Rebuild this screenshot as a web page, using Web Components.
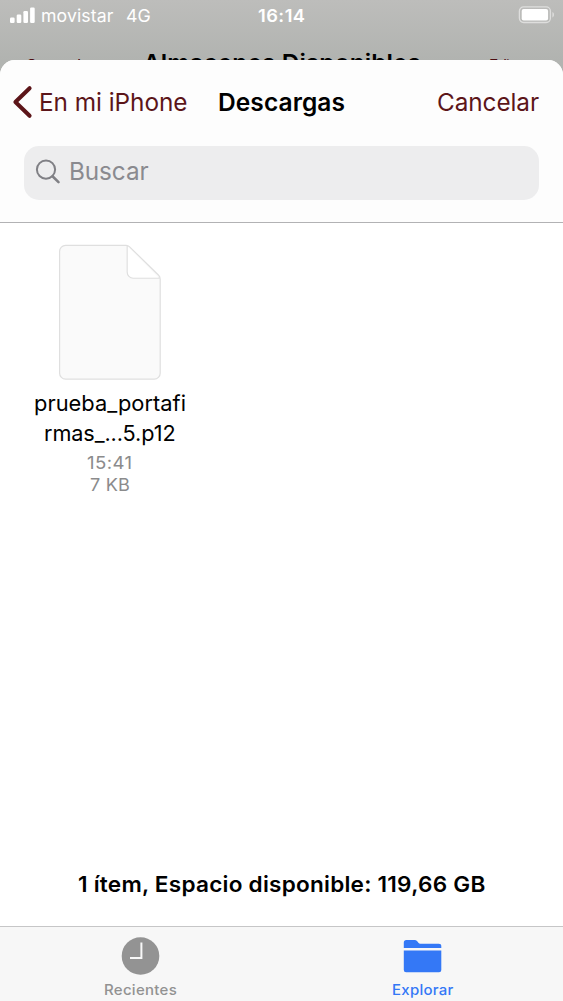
<!DOCTYPE html>
<html lang="es">
<head>
<meta charset="utf-8">
<title>Descargas</title>
<style>
html,body{margin:0;height:100%;overflow:hidden}
body{font-family:Inter,"Liberation Sans",sans-serif;font-optical-sizing:none;background:#fff}
</style>
</head>
<body>
<files-app></files-app>
<script>
const define=(name,html,ready)=>customElements.define(name,class extends HTMLElement{
  constructor(){super();this.attachShadow({mode:'open'}).innerHTML=html;}
  connectedCallback(){if(ready)ready.call(this);}
});

/* A single line of text set to its "width" attribute, half by tracking and half by stretching. */
define('fit-text','<style>:host{display:block;white-space:nowrap;flex:none}span{display:inline-block;transform-origin:0 50%}</style><span><slot></slot></span>',function(){
  const w=parseFloat(this.getAttribute('width'));
  const s=this.shadowRoot.querySelector('span');
  this.style.width=w+'px';
  const natural=s.getBoundingClientRect().width;
  if(!natural)return;
  s.style.letterSpacing=((w-natural)/2/this.textContent.length).toFixed(3)+'px';
  s.style.transform='scaleX('+(w/s.getBoundingClientRect().width).toFixed(4)+')';
});

define('signal-bars',`<style>:host{display:block;width:26px;height:17px}svg{display:block}</style>
<svg width="26" height="17" fill="#fff"><rect x="0" y="10.5" width="4.6" height="5.5" rx="1.2"/><rect x="6.7" y="7.5" width="4.6" height="8.5" rx="1.2"/><rect x="13.4" y="4" width="4.6" height="12" rx="1.2"/><rect x="20.1" y="0.5" width="4.6" height="15.5" rx="1.2"/></svg>`);

define('battery-icon',`<style>:host{display:block}svg{display:block}</style>
<svg width="37" height="18" fill="none"><rect x="1.4" y=".9" width="31" height="15.6" rx="4.2" stroke="#dededd" stroke-width="1.3"/><rect x="3.7" y="2.9" width="26.4" height="11.6" rx="2" fill="#fff"/><path d="M34.4 6v5.4c2.2-.9 2.2-4.5 0-5.4z" fill="#dcdcdb"/></svg>`);

define('status-bar',`<style>
:host{display:grid;grid-template-columns:1fr auto 1fr;height:31px;align-items:center;color:#fff;font-size:17.5px;line-height:31px}
.left{display:flex;align-items:center;padding-left:10px}
.net{margin-left:12.5px}.left .name{margin-left:5px}
.time{font-weight:600}
battery-icon{justify-self:end;margin-right:8px;margin-top:-1px}
</style>
<div class="left"><signal-bars></signal-bars><fit-text class="name" width="72.5">movistar</fit-text><fit-text class="net" width="25">4G</fit-text></div>
<fit-text class="time" width="47.5">16:14</fit-text><battery-icon></battery-icon>`);

define('back-page',`<style>
:host{display:block;height:60px;overflow:hidden;background:linear-gradient(#bdbdbb,#b1b3b0)}
.nav{display:grid;grid-template-columns:1fr auto 1fr;grid-template-rows:64px;align-items:center;padding:0 25px;color:#4b0c10;font-size:18px;line-height:64px}
.title{font-size:24.3px;font-weight:600;color:#000;margin-left:1px}
.side{padding-top:7px}
.end{justify-self:end;margin-right:12px}
</style>
<status-bar></status-bar><div class="nav"><fit-text class="side" width="72">Cancelar</fit-text><fit-text class="title" width="278">Almacenes Disponibles</fit-text><fit-text class="side end" width="37">Editar</fit-text></div>`);

define('sheet-nav',`<style>
:host{display:flex;align-items:center;height:84px;padding:0 24px 0 12px;font-size:24.4px;line-height:83px;color:#5c1519}
svg{display:block;margin-right:5.5px}
.title{font-weight:600;color:#000;margin-left:31px}
.cancel{margin-left:auto}
</style>
<svg width="21" height="34" fill="none" stroke="#5c1519" stroke-width="4" stroke-linecap="round" stroke-linejoin="round"><path d="M17.6 3.2 3.4 17 17.6 30.8"/></svg>
<fit-text width="148.5">En mi iPhone</fit-text><fit-text class="title" width="127">Descargas</fit-text><fit-text class="cancel" width="102">Cancelar</fit-text>`);

define('search-field',`<style>
:host{display:flex;align-items:center;box-sizing:border-box;height:54px;margin:1.5px 24px 0;padding-left:11px;background:#ededee;border-radius:15px;font-size:24.5px;line-height:50px;color:#8a8a8f}
svg{display:block;margin:-1px 8px 0 0}
fit-text{padding-bottom:3px}
</style>
<svg width="26" height="26" fill="none" stroke="#808085" stroke-width="2"><circle cx="11" cy="10.6" r="9.1"/><path d="m17.5 17.3 6 5.8" stroke-width="2.6" stroke-linecap="round"/></svg><fit-text width="79.5">Buscar</fit-text>`);

define('file-item',`<style>
:host{display:flex;flex-direction:column;align-items:center;width:220px;font-size:21.8px;line-height:30px;color:#000}
svg{display:block;margin-bottom:7px}
.meta{font-size:17.8px;line-height:22px;color:#8b8b8c}
.first{margin-top:4px}
</style>
<svg width="104" height="138" fill="#fafafa" stroke="#dfdfdf" stroke-width="1.2" stroke-linejoin="round"><g transform="translate(.6 .7)"><path d="M7 1.6h60.5q2 0 3.5 1.5l29 28.5q1.6 1.6 1.6 4v93.9a6 6 0 0 1-6 6H7a6 6 0 0 1-6-6V7.6a6 6 0 0 1 6-6z"/><path d="M68.6 2v26.4a6 6 0 0 0 6 6h26.6" fill="none"/><path d="M69.3 3v25.4a5.3 5.3 0 0 0 5.3 5.3h25.2z" fill="#fff" stroke="none"/></g></svg>
<fit-text width="152">prueba_portafi</fit-text><fit-text width="131.5">rmas_...5.p12</fit-text><fit-text class="meta first" width="45.5">15:41</fit-text><fit-text class="meta" width="40">7 KB</fit-text>`);

define('clock-icon',`<style>:host,svg{display:block}</style><svg width="39" height="39"><circle cx="19.5" cy="20" r="18.8" fill="#939393"/><path d="M20.4 6.6v15.3H9" fill="none" stroke="#f8f8f8" stroke-width="2"/></svg>`);
define('folder-icon',`<style>:host,svg{display:block}</style><svg width="39" height="39" fill="#3478f6"><g transform="translate(0 .6)"><path d="M.8 11.5V5.8q0-2.5 2.5-2.5h8.4q1.4 0 2.3 1.2l1.6 2q.6.7 1.6.7h18.5q2.6 0 2.6 2.4v1.9z"/><path d="M.8 13.8h37.5v19.6q0 2.3-2.3 2.3H3.1q-2.3 0-2.3-2.3z"/></g></svg>`);

define('tab-item',`<style>:host{display:flex;flex:1;flex-direction:column;align-items:center;padding-top:9px;font-size:14.5px;font-weight:500;line-height:30px;color:#929292}:host([active]){color:#3478f6}</style><slot></slot>`);
define('tab-bar',`<style>:host{display:flex;box-sizing:border-box;height:75px;border-top:1.5px solid #c6c6c7;background:#f7f7f7}</style>
<tab-item><clock-icon></clock-icon><fit-text width="73">Recientes</fit-text></tab-item><tab-item active><folder-icon></folder-icon><fit-text width="61.5">Explorar</fit-text></tab-item>`);

define('files-app',`<style>
:host{display:flex;flex-direction:column;height:1001px;background:#b2b4b1}
.sheet{display:flex;flex-direction:column;flex:1;background:#fff;border-radius:15px 15px 0 0;overflow:hidden}
header{box-sizing:border-box;height:163px;flex:none;border-bottom:1px solid #b2b2b4;background:#fdfdfd}
main{flex:1;padding-top:20px}
.summary{display:flex;justify-content:center;height:60px;padding-bottom:12px;box-sizing:border-box;font-size:22.1px;font-weight:600;line-height:36px;color:#000}
</style>
<back-page></back-page>
<div class="sheet"><header><sheet-nav></sheet-nav><search-field></search-field></header>
<main><file-item></file-item></main>
<div class="summary"><fit-text width="407.5">1 ítem, Espacio disponible: 119,66 GB</fit-text></div>
<tab-bar></tab-bar></div>`);
</script>
</body>
</html>
